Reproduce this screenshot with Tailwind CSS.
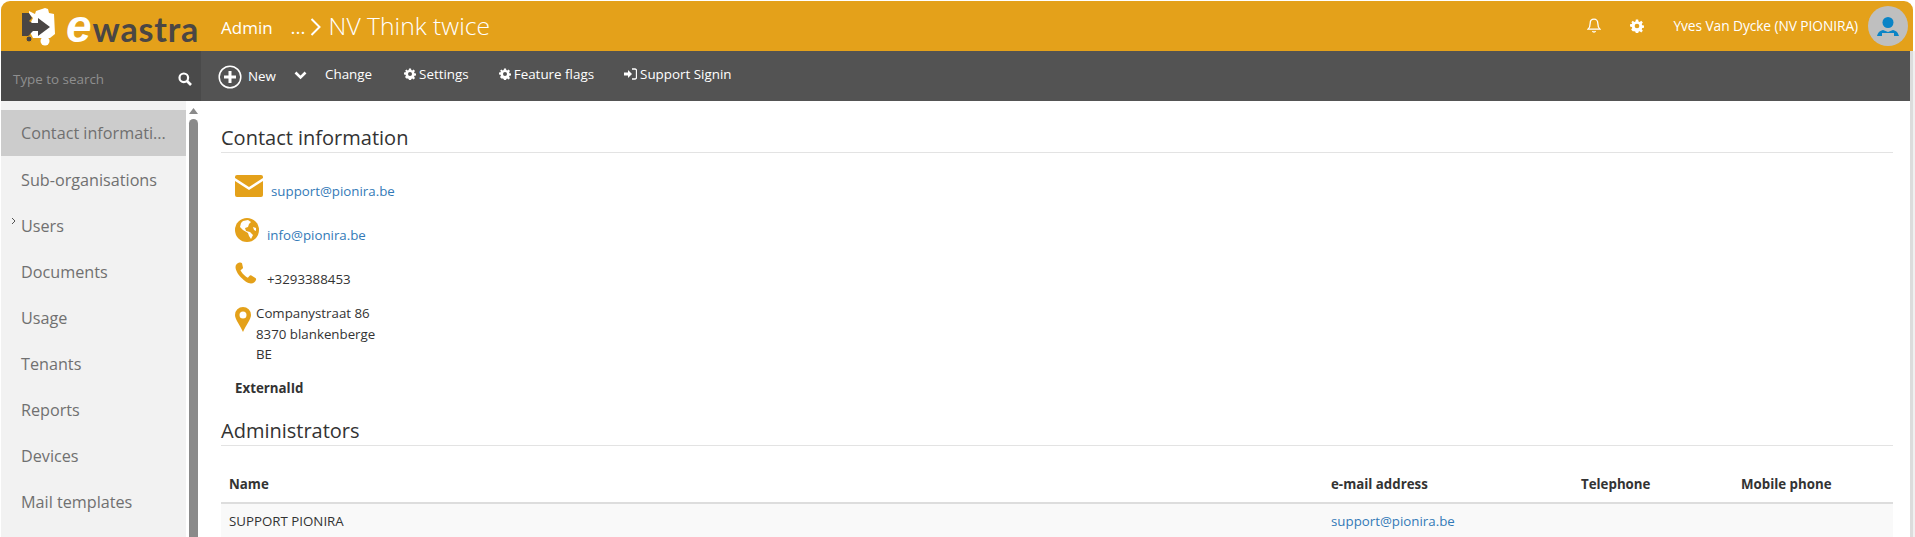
<!DOCTYPE html>
<html lang="en">
<head>
    <meta charset="UTF-8">
    <title>eWastra Admin</title>
    <script src="https://cdn.jsdelivr.net/npm/@tailwindcss/browser@4"></script>
</head>
<body class="bg-white h-[537px] overflow-hidden font-['Open_Sans',sans-serif] text-[#333]">
<div class="flex flex-col h-[537px] pt-px pl-px pr-[5px] overflow-hidden">

    <!-- Top bar -->
    <header class="h-[50px] shrink-0 -mr-[3px] bg-[#e4a11a] rounded-t-[9px] flex items-center text-white">
        <svg class="ml-[20px] w-[36px] h-[38px] mt-[2px]" viewBox="0 0 36 38">
            <path d="M8 3l6 3 1-3 9-3 3 1 1 4 5 1 1 20-5 4H12l-3-6 3-4-2-6 2-4-4-4z" fill="#fff"/>
            <path d="M1 5h7l3 5-3 3 3 2h6v-5l12 9-12 9v-5H12l-3 3-1 2H1z" fill="#4a4644"/>
            <circle cx="8" cy="31" r="3" fill="#4a4644" stroke="#e4a11a"/>
            <circle cx="24" cy="33" r="4.500" fill="#fff"/>
        </svg>
        <div class="ml-[9px] flex items-baseline text-[#4a4644] leading-none w-[134px]">
            <span class="text-white text-[46px] font-bold italic font-['Liberation_Sans',sans-serif]">e</span>
            <span class="text-[34px] font-bold tracking-[0.8px] ml-[1px] font-['Lato',sans-serif]">wastra</span>
        </div>
        <span class="ml-[21px] text-[17px] mt-[3px]">Admin</span>
        <span class="ml-[18px] text-[19px] mt-[3px]">...</span>
        <svg class="ml-[4px] w-[12px] h-[20px] mt-[1px]" viewBox="0 0 12 20"><path d="M1.500 2l8 8-8 8" fill="none" stroke="#fff" stroke-width="2"/></svg>
        <span class="ml-[7px] text-[24.700px] font-light">NV Think twice</span>
        <div class="ml-auto flex items-center">
            <svg class="w-[14px] h-[15px] mb-[1px]" viewBox="0 0 14 15"><path d="M7 1.200c-2.400 0-3.800 1.800-3.800 4 0 3.200-.8 4.800-2.200 6h12c-1.400-1.200-2.200-2.800-2.200-6 0-2.200-1.400-4-3.800-4zM5.500 13a1.600 1.600 0 0 0 3 0" fill="none" stroke="#fff" stroke-width="1.300"/></svg>
            <svg class="ml-[29px] w-[14px] h-[14px] mb-[1px]" viewBox="0 0 24 24"><path fill="#fff" fill-rule="evenodd" d="M10 1h4l.6 3.200 2 .8L19.300 3l2.700 2.800-1.900 2.700.8 2 3.100.6v3.800l-3.100.6-.8 2 1.900 2.700-2.700 2.800-2.700-2-2 .8-.6 3.200h-4l-.6-3.200-2-.8L4.700 21 2 18.200l1.900-2.700-.8-2L0 12.900V9.100l3.100-.6.800-2L2 5.800 4.700 3l2.700 2 2-.8zM12 8a4 4 0 1 0 0 8 4 4 0 0 0 0-8z"/></svg>
            <span class="ml-[29px] text-[13.800px] tracking-[-0.1px]">Yves Van Dycke (NV PIONIRA)</span>
            <div class="ml-[10px] mr-[5px] w-[40px] h-[40px] rounded-full bg-[#bfbfbf] flex items-center justify-center">
                <svg class="w-[22px] h-[21px]" viewBox="0 0 22 21"><circle cx="11" cy="6.500" r="5.500" fill="#0a84c6"/><path d="M0 20c1-3 2-5 6-6l5 2 5-2c4 1 5 3 6 6h-5v-3H5v3z" fill="#0a84c6"/></svg>
            </div>
        </div>
    </header>

    <!-- Toolbar -->
    <div class="h-[50px] shrink-0 bg-[#535353] flex text-white text-[13.400px]">
        <div class="w-[200px] bg-[#4a4a4a] flex items-center pl-[12px] pr-[9px] justify-between pt-[6px]">
            <span class="text-[#8f8f8f] text-[13.400px]">Type to search</span>
            <svg class="w-[14px] h-[14px]" viewBox="0 0 14 14"><circle cx="5.800" cy="5.800" r="4.300" fill="none" stroke="#fff" stroke-width="2.200"/><path d="M9 9l4 4" stroke="#fff" stroke-width="2.600"/></svg>
        </div>
        <div class="flex items-center h-full">
            <svg class="ml-[17px] mt-[2px] w-[24px] h-[24px]" viewBox="0 0 24 24"><circle cx="12" cy="12" r="10.800" fill="none" stroke="#fff" stroke-width="1.500"/><path d="M12 6v12M6 12h12" stroke="#fff" stroke-width="3"/></svg>
            <span class="ml-[6px]">New</span>
            <svg class="ml-[18px] w-[13px] h-[9px] mb-[1px]" viewBox="0 0 13 9"><path d="M1.500 1.500l5 5 5-5" fill="none" stroke="#fff" stroke-width="2.600"/></svg>
            <span class="ml-[18px] mb-[3px]">Change</span>
            <span class="ml-[32px] mb-[3px] flex items-center gap-[3px]">
                <svg class="w-[12px] h-[12px]" viewBox="0 0 24 24"><path fill="#fff" fill-rule="evenodd" d="M10 1h4l.6 3.200 2 .8L19.300 3l2.700 2.800-1.900 2.700.8 2 3.100.6v3.800l-3.100.6-.8 2 1.900 2.700-2.700 2.800-2.700-2-2 .8-.6 3.200h-4l-.6-3.200-2-.8L4.700 21 2 18.200l1.900-2.700-.8-2L0 12.900V9.100l3.100-.6.800-2L2 5.800 4.700 3l2.700 2 2-.8zM12 8a4 4 0 1 0 0 8 4 4 0 0 0 0-8z"/></svg>
                Settings
            </span>
            <span class="ml-[30px] mb-[3px] flex items-center gap-[3px]">
                <svg class="w-[12px] h-[12px]" viewBox="0 0 24 24"><path fill="#fff" fill-rule="evenodd" d="M10 1h4l.6 3.200 2 .8L19.300 3l2.700 2.800-1.900 2.700.8 2 3.100.6v3.800l-3.100.6-.8 2 1.900 2.700-2.700 2.800-2.700-2-2 .8-.6 3.200h-4l-.6-3.200-2-.8L4.700 21 2 18.200l1.900-2.700-.8-2L0 12.900V9.100l3.100-.6.800-2L2 5.800 4.700 3l2.700 2 2-.8zM12 8a4 4 0 1 0 0 8 4 4 0 0 0 0-8z"/></svg>
                Feature flags
            </span>
            <span class="ml-[30px] mb-[3px] flex items-center gap-[3px]">
                <svg class="w-[13px] h-[12px]" viewBox="0 0 13 12"><path d="M0 4.500h4V2l4 4-4 4V7.500H0z" fill="#fff"/><path d="M8 1h3a1.500 1.500 0 0 1 1.500 1.500v7A1.500 1.500 0 0 1 11 11H8" fill="none" stroke="#fff" stroke-width="1.300"/></svg>
                Support Signin
            </span>
        </div>
    </div>

    <div class="flex flex-1 min-h-0">
        <!-- Sidebar -->
        <aside class="w-[185px] shrink-0 bg-[#f2f2f2] pt-[9px] text-[16.200px] text-[#707070] overflow-hidden">
            <div class="h-[46px] bg-[#cccccc] flex items-center pl-[20px]">Contact informati...</div>
            <div class="h-[46px] flex items-center pl-[20px] pt-[2px]">Sub-organisations</div>
            <div class="h-[46px] flex items-center pl-[20px] pt-[2px] relative">
                <svg class="absolute left-[10px] top-[15px] w-[5px] h-[8px]" viewBox="0 0 5 8"><path d="M1 1l3 3-3 3" fill="none" stroke="#555" stroke-width="1"/></svg>
                Users
            </div>
            <div class="h-[46px] flex items-center pl-[20px] pt-[2px]">Documents</div>
            <div class="h-[46px] flex items-center pl-[20px] pt-[2px]">Usage</div>
            <div class="h-[46px] flex items-center pl-[20px] pt-[2px]">Tenants</div>
            <div class="h-[46px] flex items-center pl-[20px] pt-[2px]">Reports</div>
            <div class="h-[46px] flex items-center pl-[20px] pt-[2px]">Devices</div>
            <div class="h-[46px] flex items-center pl-[20px] pt-[2px]">Mail templates</div>
        </aside>

        <!-- Sidebar scrollbar -->
        <div class="w-[20px] shrink-0 pl-[3px] pt-[7px]">
            <svg class="w-[9px] h-[6px] ml-0" viewBox="0 0 9 6"><path d="M4.500 0L9 6H0z" fill="#8a8a8a"/></svg>
            <div class="mt-[5px] w-[9px] h-[500px] rounded-t-full bg-[#8a8a8a]"></div>
        </div>

        <!-- Content -->
        <main class="flex-1 min-w-0 pl-[15px] pr-[17px] pt-[25px]">
            <h2 class="text-[20px] leading-[27px] text-[#333] border-b border-[#e3e3e3] h-[27px] pb-[1px] box-content -mt-[2px]">Contact information</h2>

            <div class="text-[13.300px] pl-[14px]">
                <div class="flex items-center h-[24px] mt-[21px]">
                    <svg class="w-[28px] h-[22px] shrink-0" viewBox="0 0 28 22"><path d="M2 0h24a2 2 0 0 1 2 2v1L14 12 0 3V2a2 2 0 0 1 2-2z" fill="#e4a11a"/><path d="M0 6l14 9 14-9v14a2 2 0 0 1-2 2H2a2 2 0 0 1-2-2z" fill="#e4a11a"/></svg>
                    <a class="ml-[8px] mt-[11px] text-[#337ab7]">support@pionira.be</a>
                </div>
                <div class="flex items-center h-[24px] mt-[20px]">
                    <svg class="w-[24px] h-[24px] shrink-0" viewBox="0 0 24 24"><circle cx="12" cy="12" r="12" fill="#e4a11a"/><path d="M8 3l5-1 3 2-2 2-1 3-3 1 1 3 4 1 3 3-2 4-2-3-1-3-5-3-3-3 1-4z" fill="#fff"/><path d="M18 9l3 1 0 3-2-1z" fill="#fff"/></svg>
                    <a class="ml-[8px] text-[#337ab7] mt-[12px]">info@pionira.be</a>
                </div>
                <div class="flex items-center h-[24px] mt-[20px]">
                    <svg class="w-[22px] h-[22px] shrink-0 -mt-[2px]" viewBox="0 0 22 22"><path d="M4.500 .5c-2 .5-4 2-4 4.500 0 3 2.500 7.500 5.500 10.500s7 6 10 6c2.500 0 4-1.500 5-3.500.3-.8 0-1.500-.6-2l-4-2.500c-.8-.4-1.500-.2-2 .4l-1.500 1.800c-2.500-1-6.400-5-7.400-7.400l1.900-1.500c.6-.5.8-1.300.4-2L7 1.200C6.500.5 5.400.2 4.500.5z" fill="#e4a11a"/></svg>
                    <span class="ml-[10px] mt-[12px]">+3293388453</span>
                </div>
                <div class="flex items-start mt-[18px]">
                    <svg class="w-[16px] h-[25px] shrink-0 mt-[3px]" viewBox="0 0 16 25"><path fill="#e4a11a" fill-rule="evenodd" d="M8 0a8 8 0 0 0-8 8c0 4.500 5 10 8 17 3-7 8-12.500 8-17a8 8 0 0 0-8-8zm0 4.500a3.500 3.500 0 1 1 0 7 3.500 3.500 0 0 1 0-7z"/></svg>
                    <div class="ml-[5px] -mt-[1px] leading-[20.500px]">Companystraat 86<br>8370 blankenberge<br>BE</div>
                </div>
                <div class="font-bold mt-[13px] leading-[20px]">ExternalId</div>
            </div>

            <h2 class="text-[20px] leading-[27px] text-[#333] border-b border-[#e3e3e3] h-[27px] pb-[1px] box-content mt-[19px]">Administrators</h2>

            <table class="w-full mt-[25px] text-[13.300px] table-fixed">
                <thead>
                    <tr class="h-[32px] border-b-2 border-[#dddddd] text-left">
                        <th class="pl-[8px] font-bold w-[1110px] pb-[2px]">Name</th>
                        <th class="font-bold w-[250px] pb-[2px]">e-mail address</th>
                        <th class="font-bold w-[160px] pb-[2px]">Telephone</th>
                        <th class="font-bold pb-[2px]">Mobile phone</th>
                    </tr>
                </thead>
                <tbody>
                    <tr class="h-[37px] bg-[#f9f9f9]">
                        <td class="pl-[8px]">SUPPORT PIONIRA</td>
                        <td class="text-[#337ab7]">support@pionira.be</td>
                        <td></td>
                        <td></td>
                    </tr>
                </tbody>
            </table>
        </main>
    </div>
</div>
<!-- page scrollbar -->
<div class="fixed right-[2px] top-[51px] bottom-0 w-[3px] bg-[#dcdcdc]"></div>
<div class="fixed right-0 top-[51px] bottom-0 w-[2px] bg-[#f0f0f0]"></div>
</body>
</html>
